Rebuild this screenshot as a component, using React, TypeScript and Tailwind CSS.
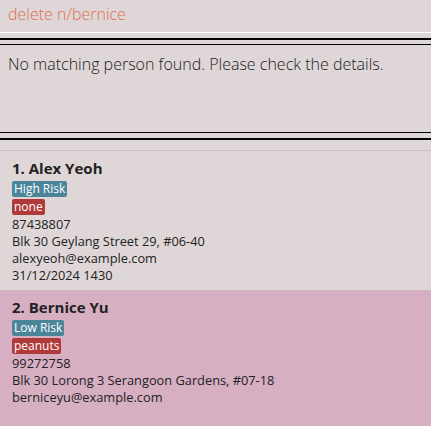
import React from 'react';

interface Person {
    name: string;
    risk: string;
    allergy: string;
    phone: string;
    address: string;
    email: string;
    appointment?: string;
}

const people: Person[] = [
    {
        name: 'Alex Yeoh',
        risk: 'High Risk',
        allergy: 'none',
        phone: '87438807',
        address: 'Blk 30 Geylang Street 29, #06-40',
        email: 'alexyeoh@example.com',
        appointment: '31/12/2024 1430',
    },
    {
        name: 'Bernice Yu',
        risk: 'Low Risk',
        allergy: 'peanuts',
        phone: '99272758',
        address: 'Blk 30 Lorong 3 Serangoon Gardens, #07-18',
        email: 'berniceyu@example.com',
    },
];

function PersonCard({ person, index, selected }: { person: Person; index: number; selected: boolean }) {
    return (
        <div className={`pl-3 pt-[7px] ${selected ? 'flex-1 bg-[#d7afc3]' : 'h-[139px] bg-[#dfd7d7]'}`}>
            <div className="text-[15px] leading-[20px] font-bold text-[#222]">
                {index + 1}. {person.name}
            </div>
            <div className="mt-[3px] flex flex-col items-start gap-[2px]">
                <span className="rounded-[2px] bg-[#4b8599] px-[2px] text-[12px] leading-[16px] text-white">{person.risk}</span>
                <span className="rounded-[2px] bg-[#b03a3a] px-[2px] text-[12px] leading-[16px] text-white">{person.allergy}</span>
            </div>
            <div className="mt-[1px] text-[12.8px] leading-[17px] text-[#222]">
                <div>{person.phone}</div>
                <div>{person.address}</div>
                <div>{person.email}</div>
                {person.appointment && <div>{person.appointment}</div>}
            </div>
        </div>
    );
}

export default function App() {
    return (
        <div className="flex h-[426px] w-[431px] flex-col overflow-hidden bg-[#dfd7d7]" style={{ fontFamily: '"Open Sans", sans-serif' }}>
            {/* command box */}
            <div className="h-[32px] pl-2 pt-[3px] text-[16px] leading-[22px] font-light text-[#df6f4f]">delete n/bernice</div>
            <div className="h-px bg-white" />
            <div className="h-[5px]" />
            <div className="h-[2px] bg-black" />
            <div className="h-[4px]" />
            <div className="h-px bg-black" />

            {/* result display */}
            <div className="h-[87px] pl-2 pt-[8px] text-[16px] leading-[22px] font-light text-[#222]">
                No matching person found. Please check the details.
            </div>
            <div className="h-px bg-black" />
            <div className="h-[5px]" />
            <div className="h-[2px] bg-black" />
            <div className="h-[10px]" />
            <div className="h-px bg-[#c8c2c2]" />

            {/* person list */}
            {people.map((p, i) => (
                <PersonCard key={p.name} person={p} index={i} selected={i === 1} />
            ))}
        </div>
    );
}
